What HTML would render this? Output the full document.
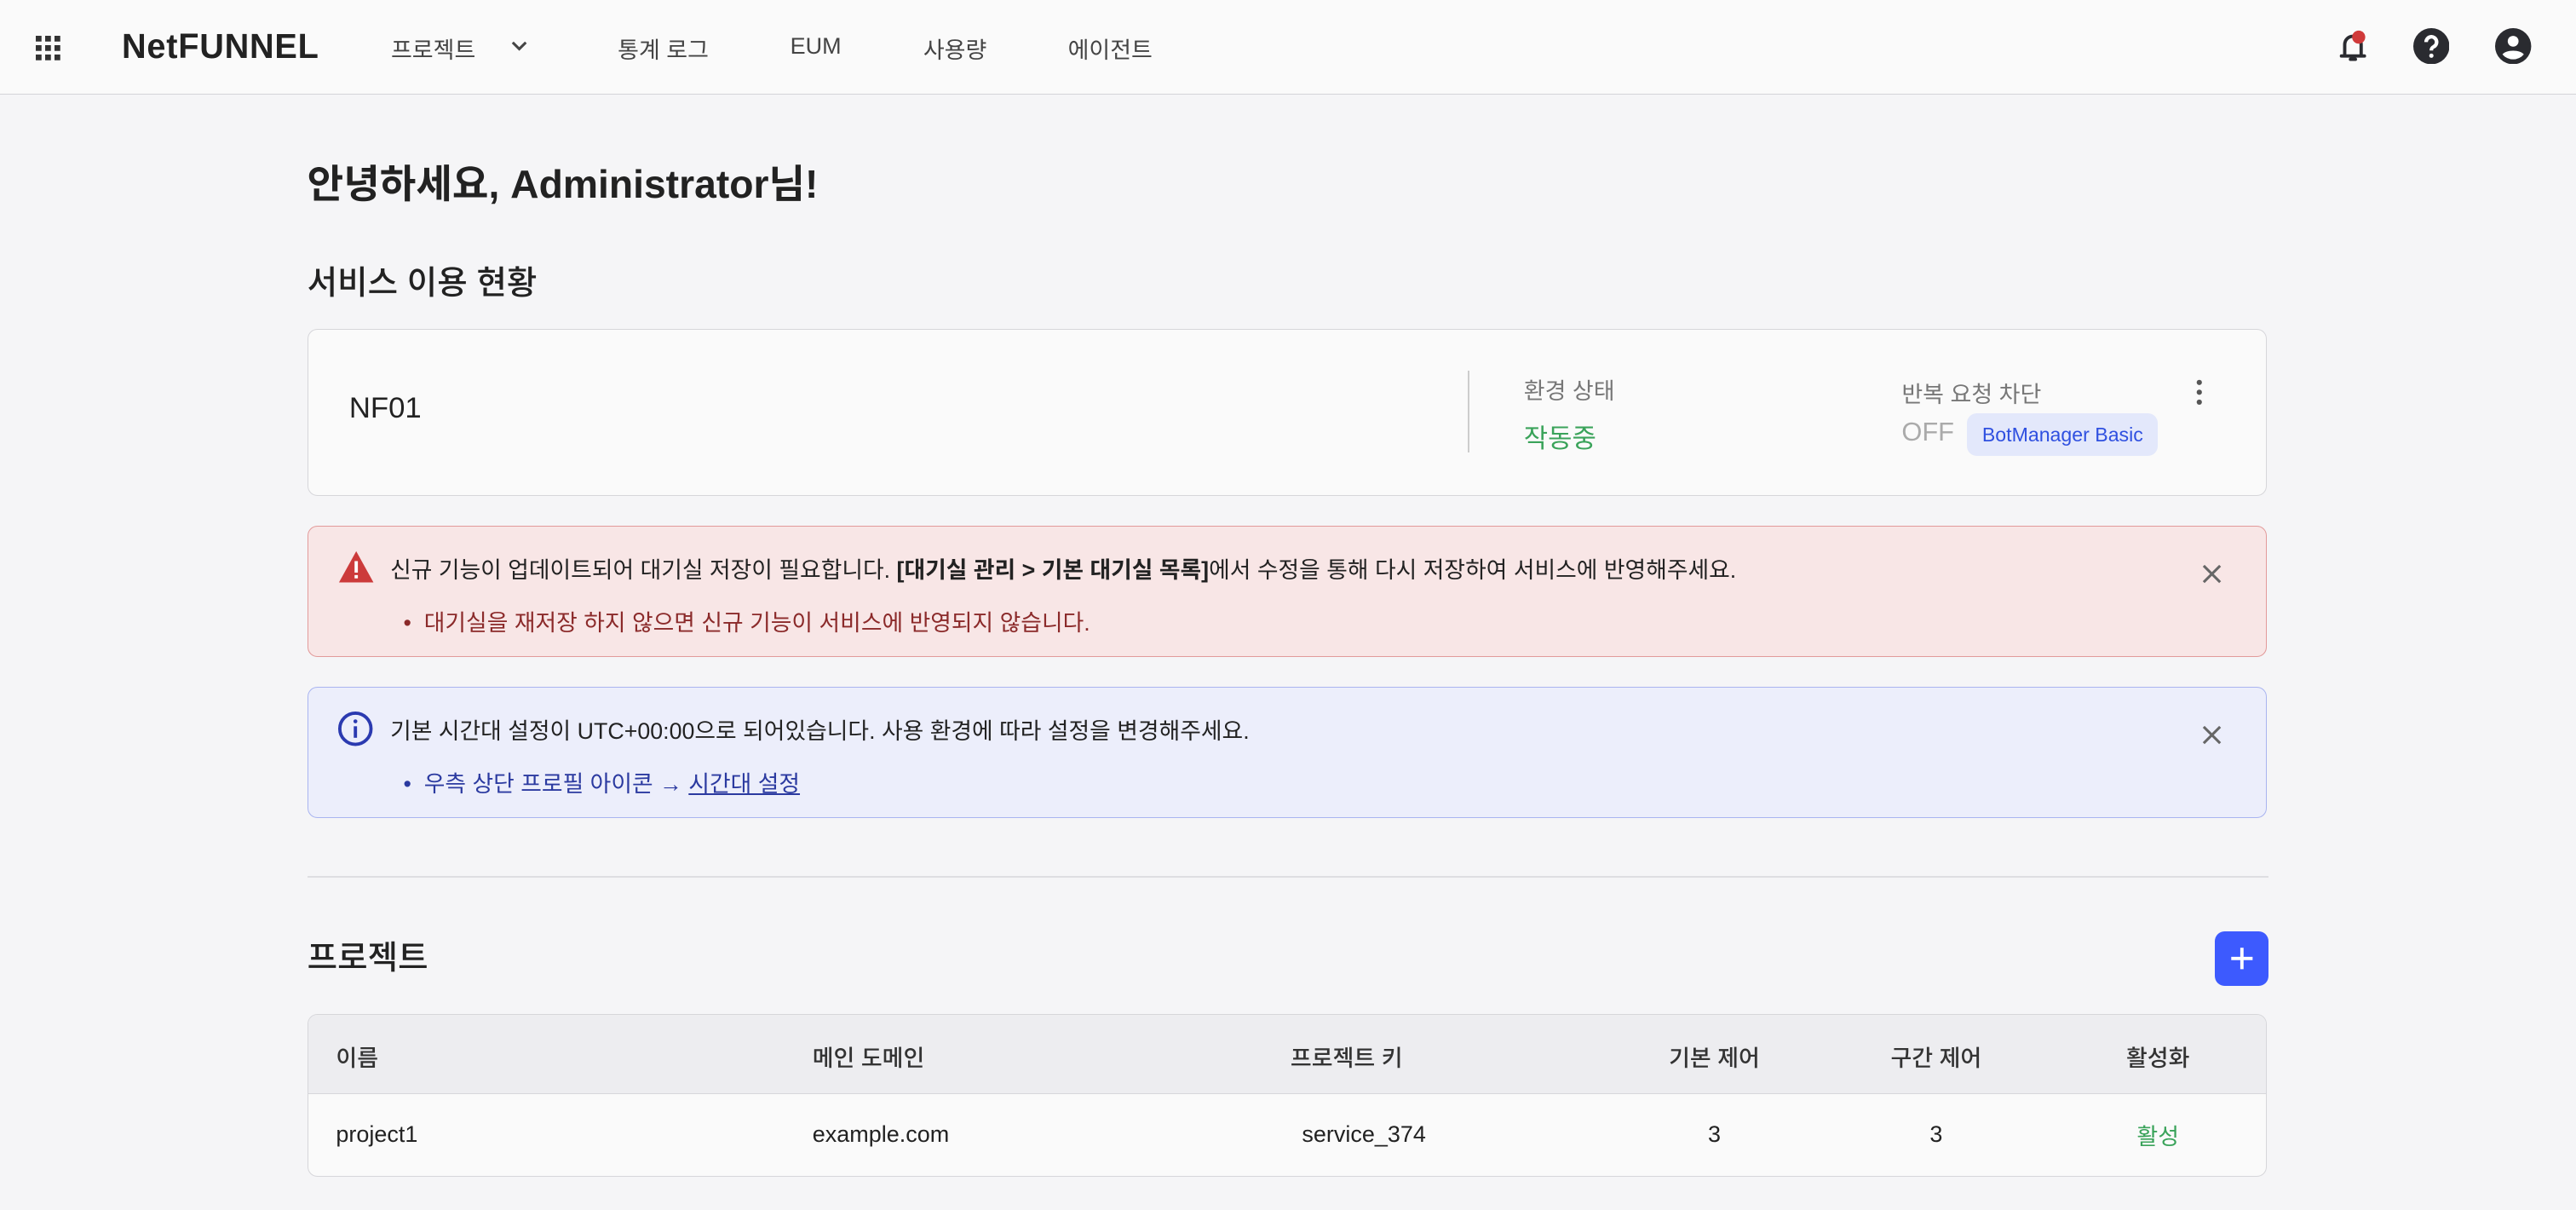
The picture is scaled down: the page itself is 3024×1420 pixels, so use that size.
<!DOCTYPE html>
<html><head><meta charset="utf-8"><style>
html,body{margin:0;padding:0;}
body{width:3024px;height:1420px;overflow:hidden;background:#f5f5f7;font-family:"Liberation Sans","Noto Sans CJK KR",sans-serif;color:#222;}
#r{zoom:1.92857;width:1568px;height:736px;position:relative;}
.a{position:absolute;white-space:nowrap;}
.hdr{position:absolute;left:0;top:0;width:1568px;height:57px;background:#fafafa;border-bottom:1px solid #d4d4d8;}
.nav{font-size:14px;color:#444;top:19px;}
.card{position:absolute;left:187px;width:1192px;border-radius:6px;}
.th{font-size:14px;color:#333;font-weight:500;}
</style></head><body><div id="r">
<div class="hdr">
 <svg class="a" style="left:22px;top:22px" width="15" height="15" viewBox="0 0 15 15" fill="#333">
  <rect x="0" y="0" width="3.5" height="3.5"/><rect x="5.7" y="0" width="3.5" height="3.5"/><rect x="11.4" y="0" width="3.5" height="3.5"/>
  <rect x="0" y="5.7" width="3.5" height="3.5"/><rect x="5.7" y="5.7" width="3.5" height="3.5"/><rect x="11.4" y="5.7" width="3.5" height="3.5"/>
  <rect x="0" y="11.4" width="3.5" height="3.5"/><rect x="5.7" y="11.4" width="3.5" height="3.5"/><rect x="11.4" y="11.4" width="3.5" height="3.5"/></svg>
 <div class="a" style="left:74px;top:16px;font-size:21px;font-weight:bold;color:#222;letter-spacing:0.4px;transform:scaleX(0.98);transform-origin:left">NetFUNNEL</div>
 <div class="a nav" style="left:238px">프로젝트</div>
 <svg class="a" style="left:310px;top:23px" width="12" height="10" viewBox="0 0 12 10"><path d="M2 3 L6 7 L10 3" fill="none" stroke="#444" stroke-width="1.6"/></svg>
 <div class="a nav" style="left:376px">통계 로그</div>
 <div class="a nav" style="left:481px;top:20px">EUM</div>
 <div class="a nav" style="left:562px">사용량</div>
 <div class="a nav" style="left:650px">에이전트</div>
 <svg class="a" style="left:1420px;top:16px" width="24" height="24" viewBox="0 0 24 24"><path d="M5 18 H19 M7 17 V11 a5 5 0 0 1 10 0 V17 M10.5 20 h3" fill="none" stroke="#2a2b30" stroke-width="2" stroke-linecap="round"/><circle cx="15.5" cy="6.5" r="4" fill="#d03a3a"/></svg>
 <svg class="a" style="left:1469px;top:17px" width="22" height="22" viewBox="0 0 22 22"><circle cx="11" cy="11" r="11" fill="#2a2b30"/><path d="M7.8 8.5 a3.2 3.2 0 1 1 4.5 2.9 c-1 .5-1.3 1-1.3 2.2" fill="none" stroke="#fff" stroke-width="2.2"/><circle cx="11" cy="16.8" r="1.3" fill="#fff"/></svg>
 <svg class="a" style="left:1519px;top:17px" width="22" height="22" viewBox="0 0 22 22"><circle cx="11" cy="11" r="11" fill="#2a2b30"/><circle cx="11" cy="8" r="3.3" fill="#fff"/><path d="M4.5 16 c2-3 11-3 13 0 a8.5 8.5 0 0 1-13 0z" fill="#fff"/></svg>
</div>
<div class="a" style="left:187px;top:93px;font-size:24px;font-weight:bold;color:#222">안녕하세요, Administrator님!</div>
<div class="a" style="left:187px;top:156px;font-size:20px;font-weight:500;color:#222">서비스 이용 현황</div>
<div class="card" style="top:200px;height:101px;background:#fafafa;border:1px solid #d6d6da">
 <div class="a" style="left:25px;top:38px;font-size:18px">NF01</div>
 <div class="a" style="left:706px;top:25px;width:1px;height:50px;background:#ccc"></div>
 <div class="a" style="left:740px;top:26px;font-size:14px;color:#777">환경 상태</div>
 <div class="a" style="left:740px;top:53px;font-size:16px;color:#3aa35a">작동중</div>
 <div class="a" style="left:970px;top:28px;font-size:14px;color:#777">반복 요청 차단</div>
 <div class="a" style="left:970px;top:53px;font-size:16px;color:#aaa">OFF</div>
 <div class="a" style="left:1010px;top:51px;width:116px;height:26px;border-radius:6px;background:#e3e8fb;color:#2f50e0;font-size:12px;line-height:26px;text-align:center">BotManager Basic</div>
 <svg class="a" style="left:1148px;top:29px" width="6" height="18" viewBox="0 0 6 18" fill="#555"><circle cx="3" cy="3" r="1.6"/><circle cx="3" cy="9" r="1.6"/><circle cx="3" cy="15" r="1.6"/></svg>
</div>
<div class="card" style="top:320px;height:79px;background:#f8e6e6;border:1px solid #e29a9a">
 <svg class="a" style="left:18px;top:14px" width="23" height="21" viewBox="0 0 23 21"><path d="M11.5 1 L22 20 H1z" fill="#cc3a3a"/><rect x="10.5" y="7" width="2" height="7" fill="#fff"/><rect x="10.5" y="15.5" width="2" height="2" fill="#fff"/></svg>
 <div class="a" style="left:50px;top:15px;font-size:13.9px;color:#222">신규 기능이 업데이트되어 대기실 저장이 필요합니다. <b>[대기실 관리 &gt; 기본 대기실 목록]</b>에서 수정을 통해 다시 저장하여 서비스에 반영해주세요.</div>
 <div class="a" style="left:58px;top:47px;font-size:13.9px;color:#8b2a2a">•&nbsp; 대기실을 재저장 하지 않으면 신규 기능이 서비스에 반영되지 않습니다.</div>
 <svg class="a" style="left:1153px;top:23px" width="12" height="12" viewBox="0 0 12 12"><path d="M1 1 L11 11 M11 1 L1 11" stroke="#666" stroke-width="1.6"/></svg>
</div>
<div class="card" style="top:418px;height:79px;background:#eceefb;border:1px solid #a9b4f0">
 <svg class="a" style="left:18px;top:14px" width="22" height="22" viewBox="0 0 22 22"><circle cx="11" cy="11" r="9.5" fill="none" stroke="#2b3ab0" stroke-width="2"/><rect x="10" y="9.5" width="2" height="7" fill="#2b3ab0"/><circle cx="11" cy="6.5" r="1.2" fill="#2b3ab0"/></svg>
 <div class="a" style="left:50px;top:15px;font-size:13.9px;color:#222">기본 시간대 설정이 UTC+00:00으로 되어있습니다. 사용 환경에 따라 설정을 변경해주세요.</div>
 <div class="a" style="left:58px;top:47px;font-size:13.9px;color:#2b3aa0">•&nbsp; 우측 상단 프로필 아이콘 → <span style="text-decoration:underline">시간대 설정</span></div>
 <svg class="a" style="left:1153px;top:23px" width="12" height="12" viewBox="0 0 12 12"><path d="M1 1 L11 11 M11 1 L1 11" stroke="#666" stroke-width="1.6"/></svg>
</div>
<div class="a" style="left:187px;top:533px;width:1194px;height:1px;background:#dedee2"></div>
<div class="a" style="left:187px;top:567px;font-size:20px;font-weight:500;color:#222">프로젝트</div>
<div class="a" style="left:1348px;top:567px;width:33px;height:33px;border-radius:6px;background:#3d5afe"><svg width="33" height="33" viewBox="0 0 33 33"><path d="M16.5 10 V23 M10 16.5 H23" stroke="#fff" stroke-width="2"/></svg></div>
<div class="card" style="top:617px;height:98px;border:1px solid #d6d6da;overflow:hidden;background:#fafafa">
 <div class="a" style="left:0;top:0;width:1192px;height:48px;background:#ededf0;border-bottom:1px solid #d6d6da"></div>
 <div class="a th" style="left:17px;top:15px">이름</div>
 <div class="a th" style="left:307px;top:15px">메인 도메인</div>
 <div class="a th" style="left:598px;top:15px">프로젝트 키</div>
 <div class="a th" style="left:856px;top:15px;transform:translateX(-50%)">기본 제어</div>
 <div class="a th" style="left:991px;top:15px;transform:translateX(-50%)">구간 제어</div>
 <div class="a th" style="left:1126px;top:15px;transform:translateX(-50%)">활성화</div>
 <div class="a" style="left:17px;top:65px;font-size:14px">project1</div>
 <div class="a" style="left:307px;top:65px;font-size:14px">example.com</div>
 <div class="a" style="left:605px;top:65px;font-size:14px">service_374</div>
 <div class="a" style="left:856px;top:65px;font-size:14px;transform:translateX(-50%)">3</div>
 <div class="a" style="left:991px;top:65px;font-size:14px;transform:translateX(-50%)">3</div>
 <div class="a" style="left:1126px;top:63px;font-size:14px;color:#3aa35a;transform:translateX(-50%)">활성</div>
</div>
</div></body></html>
